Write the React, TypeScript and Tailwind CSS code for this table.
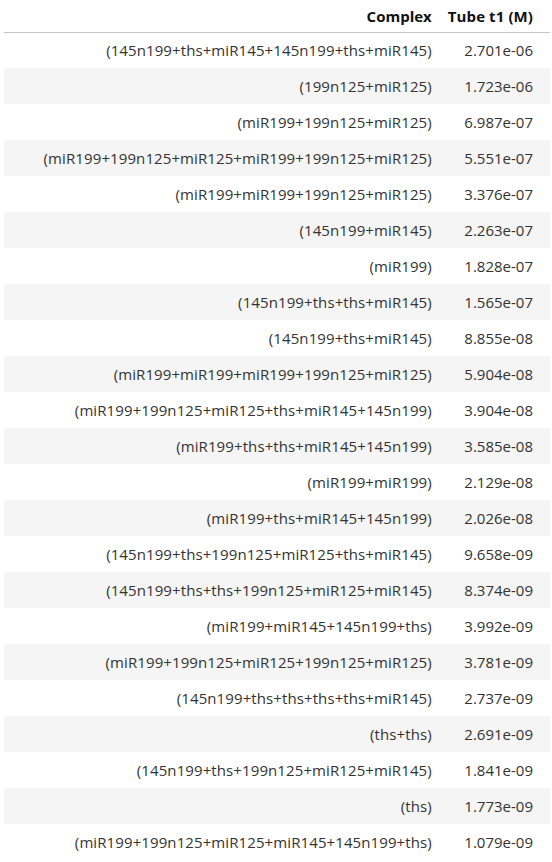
const rows: [string, string][] = [
  ["(145n199+ths+miR145+145n199+ths+miR145)", "2.701e-06"],
  ["(199n125+miR125)", "1.723e-06"],
  ["(miR199+199n125+miR125)", "6.987e-07"],
  ["(miR199+199n125+miR125+miR199+199n125+miR125)", "5.551e-07"],
  ["(miR199+miR199+199n125+miR125)", "3.376e-07"],
  ["(145n199+miR145)", "2.263e-07"],
  ["(miR199)", "1.828e-07"],
  ["(145n199+ths+ths+miR145)", "1.565e-07"],
  ["(145n199+ths+miR145)", "8.855e-08"],
  ["(miR199+miR199+miR199+199n125+miR125)", "5.904e-08"],
  ["(miR199+199n125+miR125+ths+miR145+145n199)", "3.904e-08"],
  ["(miR199+ths+ths+miR145+145n199)", "3.585e-08"],
  ["(miR199+miR199)", "2.129e-08"],
  ["(miR199+ths+miR145+145n199)", "2.026e-08"],
  ["(145n199+ths+199n125+miR125+ths+miR145)", "9.658e-09"],
  ["(145n199+ths+ths+199n125+miR125+miR145)", "8.374e-09"],
  ["(miR199+miR145+145n199+ths)", "3.992e-09"],
  ["(miR199+199n125+miR125+199n125+miR125)", "3.781e-09"],
  ["(145n199+ths+ths+ths+ths+miR145)", "2.737e-09"],
  ["(ths+ths)", "2.691e-09"],
  ["(145n199+ths+199n125+miR125+miR145)", "1.841e-09"],
  ["(ths)", "1.773e-09"],
  ["(miR199+199n125+miR125+miR145+145n199+ths)", "1.079e-09"],
];

export default function App() {
  return (
    <div className="bg-white pl-[4px] pr-[2px] font-['Open_Sans',sans-serif] text-[15px] text-[#333]">
      <table className="w-full border-collapse">
        <thead>
          <tr className="h-[32px] border-b border-[#c4c4c4]">
            <th className="pr-[8px] text-right font-bold text-[#111]">Complex</th>
            <th className="w-[110px] pl-[8px] pr-[17px] text-right font-bold text-[#111] whitespace-nowrap tracking-[0.1px]">
              Tube t1 (M)
            </th>
          </tr>
        </thead>
        <tbody>
          {rows.map(([complex, conc], i) => (
            <tr key={i} className={"h-[36px] " + (i % 2 === 1 ? "bg-[#f5f5f5]" : "")}>
              <td className="pr-[8px] text-right whitespace-nowrap tracking-[0.1px]">{complex}</td>
              <td className="pl-[8px] pr-[17px] text-right">{conc}</td>
            </tr>
          ))}
        </tbody>
      </table>
    </div>
  );
}
